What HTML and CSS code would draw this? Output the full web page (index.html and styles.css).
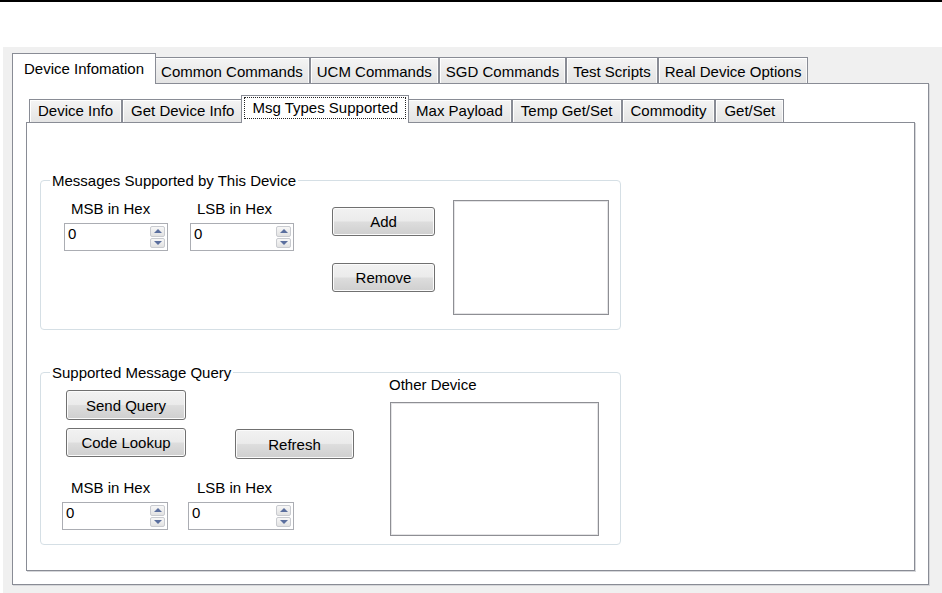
FILE: index.html
```html
<!DOCTYPE html>
<html lang="en">
<head>
    <meta charset="UTF-8">
    <title>Device Information</title>
    <link rel="stylesheet" href="styles.css">
</head>
<body>
    <div class="window">
        <div class="tab-strip outer-tabs">
            <div class="tab selected">Device Infomation</div>
            <div class="tab">Common Commands</div>
            <div class="tab">UCM Commands</div>
            <div class="tab">SGD Commands</div>
            <div class="tab">Test Scripts</div>
            <div class="tab">Real Device Options</div>
        </div>
        <div class="tab-page outer-page">
            <div class="tab-strip inner-tabs">
                <div class="tab">Device Info</div>
                <div class="tab">Get Device Info</div>
                <div class="tab selected"><span class="focus">Msg Types Supported</span></div>
                <div class="tab">Max Payload</div>
                <div class="tab">Temp Get/Set</div>
                <div class="tab">Commodity</div>
                <div class="tab">Get/Set</div>
            </div>
            <div class="tab-page inner-page">

                <!-- messages this device supports -->
                <fieldset class="group group-local">
                    <legend>Messages Supported by This Device</legend>
                    <div class="group-body">
                        <div class="spin-field">
                            <label>MSB in Hex</label>
                            <div class="spinner">
                                <span class="value">0</span>
                                <div class="spin-btns"><span class="up"></span><span class="down"></span></div>
                            </div>
                        </div>
                        <div class="spin-field second">
                            <label>LSB in Hex</label>
                            <div class="spinner">
                                <span class="value">0</span>
                                <div class="spin-btns"><span class="up"></span><span class="down"></span></div>
                            </div>
                        </div>
                        <div class="button-col">
                            <button class="btn btn-add">Add</button>
                            <button class="btn btn-remove">Remove</button>
                        </div>
                        <div class="listbox local-list"></div>
                    </div>
                </fieldset>

                <!-- query the other device -->
                <fieldset class="group group-query">
                    <legend>Supported Message Query</legend>
                    <div class="group-body">
                        <div class="query-controls">
                            <div class="query-row">
                                <button class="btn btn-wide">Send Query</button>
                            </div>
                            <div class="query-row row-lookup">
                                <button class="btn btn-wide btn-lookup">Code Lookup</button>
                                <button class="btn btn-refresh">Refresh</button>
                            </div>
                            <div class="query-row row-spin">
                                <div class="spin-field">
                                    <label>MSB in Hex</label>
                                    <div class="spinner">
                                        <span class="value">0</span>
                                        <div class="spin-btns"><span class="up"></span><span class="down"></span></div>
                                    </div>
                                </div>
                                <div class="spin-field second">
                                    <label>LSB in Hex</label>
                                    <div class="spinner">
                                        <span class="value">0</span>
                                        <div class="spin-btns"><span class="up"></span><span class="down"></span></div>
                                    </div>
                                </div>
                            </div>
                        </div>
                        <div class="other-device">
                            <label>Other Device</label>
                            <div class="listbox other-list"></div>
                        </div>
                    </div>
                </fieldset>

            </div>
        </div>
    </div>
</body>
</html>
```

FILE: styles.css
```css
/* WinForms (Win7 theme) look */
body {
    margin: 0;
    border-top: 2px solid #000;
    background-color: #fff;
    font-family: "Liberation Sans", Arial, sans-serif;
    font-size: 15px;
    line-height: 17px;
    color: #000;
    overflow: hidden;
}
.window {
    margin: 45px 0 0 3px;
    padding: 6px 0 0 9px;
    height: calc(100vh - 47px);
    box-sizing: border-box;
    background-color: #f0f0f0;
}

/* tabs */
.tab-strip {
    display: flex;
    align-items: flex-end;
}
.outer-tabs {
    height: 30px;
    padding-left: 2px;
}
.inner-tabs {
    height: 27px;
    padding-left: 3px;
}
.tab {
    box-sizing: border-box;
    height: 26px;
    padding: 5px 6px 0;
    border: 1px solid #898c95;
    border-bottom: none;
    background: linear-gradient(#f4f4f4, #e4e4e4);
    box-shadow: inset 1px 1px 0 #fff, inset -1px 0 0 #fafafa;
    white-space: nowrap;
}
.tab.selected {
    position: relative;
    z-index: 1;
    height: 31px;
    margin: 0 -2px -1px;
    padding: 6px 11px 0;
    background: #fff;
    box-shadow: none;
}
.inner-tabs .tab {
    height: 23px;
    padding: 2px 8px 0;
}
.inner-tabs .tab.selected {
    height: 28px;
    padding: 1px 2px 0;
}
.focus {
    display: block;
    height: 22px;
    box-sizing: border-box;
    padding: 1px 7px 0;
    border: 1px dotted #222;
}
.tab-page {
    box-sizing: border-box;
    border: 1px solid #898c95;
    background-color: #fff;
    box-shadow: 1px 1px 0 #d6d7da;
}
.outer-page {
    width: 917px;
    padding: 11px 13px 13px;
}
.inner-page {
    height: 449px;
    padding: 49px 0 0 13px;
}

/* group boxes */
.group {
    box-sizing: border-box;
    width: 581px;
    min-width: 0;
    margin: 0;
    padding: 11px 0 14px;
    border: 1px solid #d5dfe5;
    border-radius: 4px;
}
.group legend {
    margin-left: 9px;
    padding: 0 2px;
}
.group-body {
    display: flex;
    align-items: flex-start;
    padding-left: 23px;
}
.group-query {
    margin-top: 34px;
    padding: 9px 0 8px;
}
.group-query .group-body {
    padding-left: 21px;
}

/* numeric up/down */
.spin-field label {
    display: block;
    margin-left: 7px;
}
.spin-field.second {
    margin-left: 22px;
}
.spinner {
    box-sizing: border-box;
    display: flex;
    width: 104px;
    height: 28px;
    margin-top: 6px;
    border: 1px solid #abadb3;
    background-color: #fff;
}
.spinner .value {
    flex: 1;
    padding: 1px 0 0 3px;
}
.spin-btns {
    display: flex;
    flex-direction: column;
    gap: 1px;
    width: 15px;
    margin: 2px 2px 2px 0;
}
.spin-btns span {
    flex: 1;
    display: flex;
    align-items: center;
    justify-content: center;
    border: 1px solid #c9cbd0;
    border-radius: 2px;
    background: linear-gradient(#f7f7f7, #e2e2e2);
}
.spin-btns .up::before {
    content: "";
    border-left: 4px solid transparent;
    border-right: 4px solid transparent;
    border-bottom: 4px solid #5b6f9e;
}
.spin-btns .down::before {
    content: "";
    border-left: 4px solid transparent;
    border-right: 4px solid transparent;
    border-top: 4px solid #5b6f9e;
}

/* buttons */
.btn {
    box-sizing: border-box;
    display: block;
    width: 103px;
    height: 29px;
    padding: 0;
    border: 1px solid #707070;
    border-radius: 3px;
    background: linear-gradient(#f2f2f2 0%, #ebebeb 48%, #dddddd 52%, #cfcfcf 100%);
    box-shadow: inset 0 0 0 1px #fbfbfb;
    font: inherit;
    color: #000;
}
.button-col {
    margin-left: 38px;
}
.btn-add {
    margin-top: 7px;
}
.btn-remove {
    margin-top: 27px;
}

/* list boxes */
.listbox {
    box-sizing: border-box;
    border: 1px solid #8e8f94;
    box-shadow: inset 0 0 0 1px #e4e4e6;
    background-color: #fff;
}
.local-list {
    width: 156px;
    height: 115px;
    margin-left: 18px;
}

/* query group */
.query-row {
    display: flex;
    align-items: flex-start;
}
.btn-wide {
    width: 120px;
    height: 30px;
    margin-left: 4px;
}
.row-lookup {
    margin-top: 8px;
}
.btn-lookup {
    height: 29px;
}
.btn-refresh {
    width: 119px;
    height: 30px;
    margin: 1px 0 0 49px;
}
.row-spin {
    margin-top: 20px;
}
.row-spin .spinner {
    width: 106px;
}
.row-spin .spin-field label {
    margin-left: 9px;
}
.row-spin .spin-field.second {
    margin-left: 20px;
}
.other-device {
    margin: -14px 0 0 35px;
}
.other-list {
    width: 209px;
    height: 134px;
    margin: 9px 0 0 1px;
}
```
